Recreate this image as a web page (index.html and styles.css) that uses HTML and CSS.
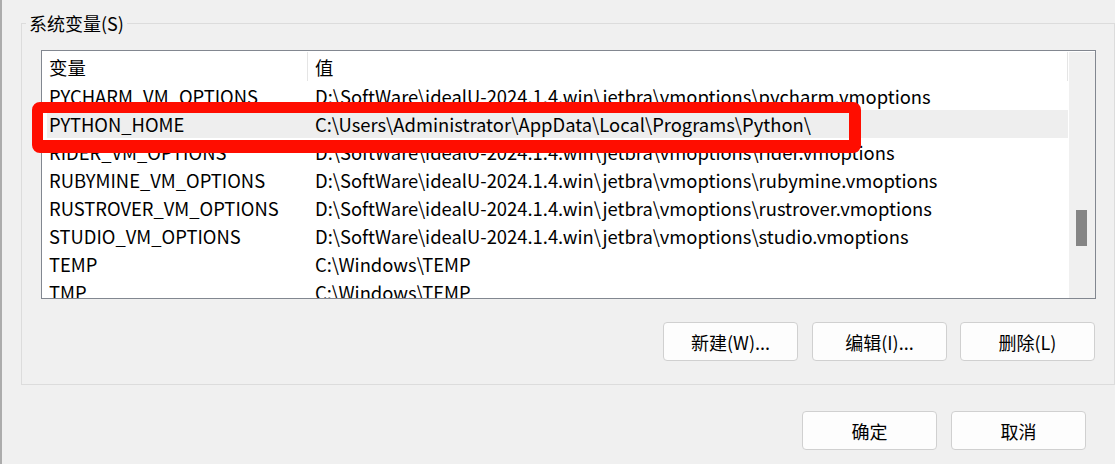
FILE: index.html
```html
<!DOCTYPE html>
<html lang="zh-CN">
<head>
<meta charset="UTF-8">
<title>系统变量</title>
<link rel="stylesheet" href="styles.css">
</head>
<body>
<div class="window">
  <fieldset class="group">
    <legend>系统变量(S)</legend>
    <div class="list-wrap">
      <div class="list">
        <div class="list-body">
          <div class="row head">
            <div class="cell name">变量</div>
            <div class="cell value">值</div>
          </div>
          <div class="row"><div class="cell name">PYCHARM_VM_OPTIONS</div><div class="cell value">D:\SoftWare\idealU-2024.1.4.win\jetbra\vmoptions\pycharm.vmoptions</div></div>
          <div class="row selected"><div class="cell name">PYTHON_HOME</div><div class="cell value">C:\Users\Administrator\AppData\Local\Programs\Python\</div></div>
          <div class="row"><div class="cell name">RIDER_VM_OPTIONS</div><div class="cell value">D:\SoftWare\idealU-2024.1.4.win\jetbra\vmoptions\rider.vmoptions</div></div>
          <div class="row"><div class="cell name">RUBYMINE_VM_OPTIONS</div><div class="cell value">D:\SoftWare\idealU-2024.1.4.win\jetbra\vmoptions\rubymine.vmoptions</div></div>
          <div class="row"><div class="cell name">RUSTROVER_VM_OPTIONS</div><div class="cell value">D:\SoftWare\idealU-2024.1.4.win\jetbra\vmoptions\rustrover.vmoptions</div></div>
          <div class="row"><div class="cell name">STUDIO_VM_OPTIONS</div><div class="cell value">D:\SoftWare\idealU-2024.1.4.win\jetbra\vmoptions\studio.vmoptions</div></div>
          <div class="row"><div class="cell name">TEMP</div><div class="cell value">C:\Windows\TEMP</div></div>
          <div class="row"><div class="cell name">TMP</div><div class="cell value">C:\Windows\TEMP</div></div>
        </div>
        <div class="scrollbar"><div class="thumb"></div></div>
      </div>
      <!-- red annotation box drawn over the selected row -->
      <div class="mark"></div>
    </div>
    <div class="actions">
      <button>新建(W)...</button>
      <button>编辑(I)...</button>
      <button>删除(L)</button>
    </div>
  </fieldset>
  <div class="footer">
    <button>确定</button>
    <button>取消</button>
  </div>
</div>
</body>
</html>
```

FILE: styles.css
```css
:root {
  --bg: #f0f0f0;
  --line: #dcdcdc;
  --list-border: #828790;
  --font: "Noto Sans CJK SC", sans-serif;
}
html, body {
  margin: 0; padding: 0;
  background: var(--bg);
}
body {
  border-left: 2px solid #acacac;
  height: 464px; box-sizing: border-box;
  overflow: hidden;
  font-family: var(--font);
  color: #000;
}
.window {
  padding-top: 12px;
}
.group {
  margin: 0 0 0 19px;
  padding: 0 18px 23px 19px;
  border: 1px solid var(--line);
  min-width: 0;
}
.group legend {
  margin-left: -15px;
  padding: 0 3px;
  font-size: 18px;
  line-height: 22px;
}
.list-wrap {
  position: relative;
  margin-top: 16px;
}
.list {
  height: 247px;
  border: 1px solid var(--list-border);
  background: #fff;
  display: flex;
  overflow: hidden;
}
.list-body {
  flex: 1;
  min-width: 0;
}
.row {
  display: flex;
  height: 28px;
  align-items: center;
  font-size: 18.4px;
  white-space: nowrap;
}
.row.head {
  height: 31px;
}
.row.head .cell {
  border-right: 1px solid #e5e5e5;
  height: 29px;
}
.row.head .value { flex: 1; }
.cell {
  display: flex; align-items: center;
  padding-left: 7px;
  box-sizing: border-box;
}
.cell.name { width: 266px; }
.row.selected {
  background: #eeeeee;
  margin-left: 5px;
}
.row.selected .name { width: 261px; padding-left: 2px; }
.mark {
  position: absolute;
  left: -9px; top: 52px;
  width: 829px; height: 51px;
  box-sizing: border-box;
  border: solid #ff0d00;
  border-width: 11px 12px 13px 11px;
  border-radius: 8px;
}
.scrollbar {
  width: 26px;
  background: var(--bg);
  border-left: 1px solid #fff;
  margin-top: 1px;
  position: relative;
}
.thumb {
  position: absolute;
  left: 7px; top: 158px;
  width: 11px; height: 36px;
  background: #858585;
}
button {
  width: 135px; height: 39px;
  background: #fdfdfd;
  border: 1px solid #d0d0d0;
  border-radius: 4px;
  font-family: var(--font);
  font-size: 18px;
  color: #000;
  padding: 0;
}
.actions {
  display: flex; justify-content: flex-end; gap: 14px 13px;
  column-gap: 13px;
  margin-top: 23px;
  padding-right: 1px;
}
.actions button:first-child { margin-right: 1px; }
.footer {
  display: flex; justify-content: flex-end; gap: 14px;
  padding: 26px 29px 0 0;
}
```
